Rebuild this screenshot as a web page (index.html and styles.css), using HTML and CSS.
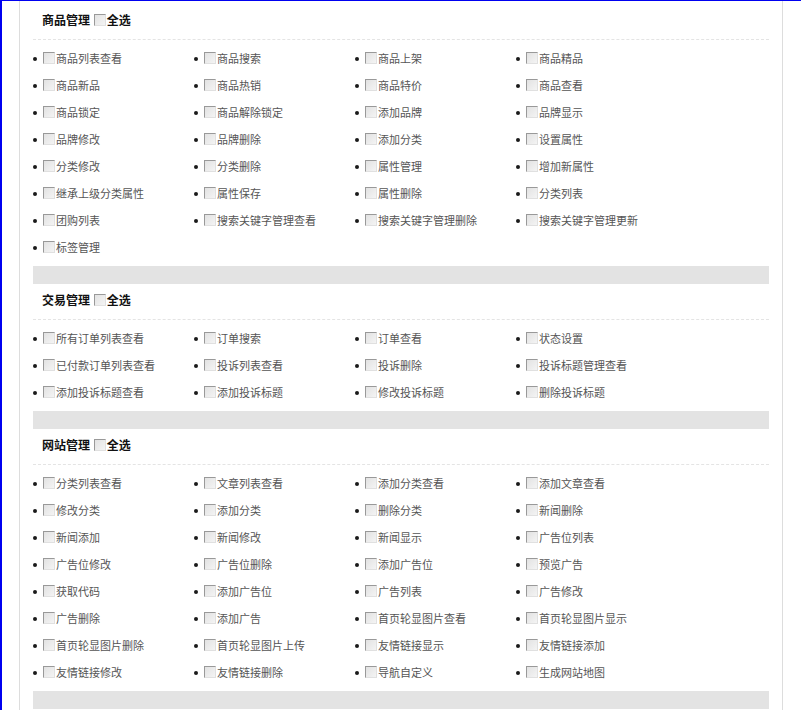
FILE: index.html
```html
<!DOCTYPE html>
<html lang="zh-CN">
<head>
  <meta charset="UTF-8" />
  <title>权限设置</title>
  <link rel="stylesheet" href="styles.css">
</head>
<body>
  <div class="wrap">

    <!-- 商品管理 -->
    <div class="group">
      <h3 class="group-title">商品管理 <label><input type="checkbox" class="chk">全选</label></h3>
      <ul class="perm-list">
        <li><input type="checkbox" class="chk">商品列表查看</li>
        <li><input type="checkbox" class="chk">商品搜索</li>
        <li><input type="checkbox" class="chk">商品上架</li>
        <li><input type="checkbox" class="chk">商品精品</li>
        <li><input type="checkbox" class="chk">商品新品</li>
        <li><input type="checkbox" class="chk">商品热销</li>
        <li><input type="checkbox" class="chk">商品特价</li>
        <li><input type="checkbox" class="chk">商品查看</li>
        <li><input type="checkbox" class="chk">商品锁定</li>
        <li><input type="checkbox" class="chk">商品解除锁定</li>
        <li><input type="checkbox" class="chk">添加品牌</li>
        <li><input type="checkbox" class="chk">品牌显示</li>
        <li><input type="checkbox" class="chk">品牌修改</li>
        <li><input type="checkbox" class="chk">品牌删除</li>
        <li><input type="checkbox" class="chk">添加分类</li>
        <li><input type="checkbox" class="chk">设置属性</li>
        <li><input type="checkbox" class="chk">分类修改</li>
        <li><input type="checkbox" class="chk">分类删除</li>
        <li><input type="checkbox" class="chk">属性管理</li>
        <li><input type="checkbox" class="chk">增加新属性</li>
        <li><input type="checkbox" class="chk">继承上级分类属性</li>
        <li><input type="checkbox" class="chk">属性保存</li>
        <li><input type="checkbox" class="chk">属性删除</li>
        <li><input type="checkbox" class="chk">分类列表</li>
        <li><input type="checkbox" class="chk">团购列表</li>
        <li><input type="checkbox" class="chk">搜索关键字管理查看</li>
        <li><input type="checkbox" class="chk">搜索关键字管理删除</li>
        <li><input type="checkbox" class="chk">搜索关键字管理更新</li>
        <li><input type="checkbox" class="chk">标签管理</li>
      </ul>
    </div>
    <div class="group-sep"></div>

    <!-- 交易管理 -->
    <div class="group">
      <h3 class="group-title">交易管理 <label><input type="checkbox" class="chk">全选</label></h3>
      <ul class="perm-list">
        <li><input type="checkbox" class="chk">所有订单列表查看</li>
        <li><input type="checkbox" class="chk">订单搜索</li>
        <li><input type="checkbox" class="chk">订单查看</li>
        <li><input type="checkbox" class="chk">状态设置</li>
        <li><input type="checkbox" class="chk">已付款订单列表查看</li>
        <li><input type="checkbox" class="chk">投诉列表查看</li>
        <li><input type="checkbox" class="chk">投诉删除</li>
        <li><input type="checkbox" class="chk">投诉标题管理查看</li>
        <li><input type="checkbox" class="chk">添加投诉标题查看</li>
        <li><input type="checkbox" class="chk">添加投诉标题</li>
        <li><input type="checkbox" class="chk">修改投诉标题</li>
        <li><input type="checkbox" class="chk">删除投诉标题</li>
      </ul>
    </div>
    <div class="group-sep"></div>

    <!-- 网站管理 -->
    <div class="group">
      <h3 class="group-title">网站管理 <label><input type="checkbox" class="chk">全选</label></h3>
      <ul class="perm-list">
        <li><input type="checkbox" class="chk">分类列表查看</li>
        <li><input type="checkbox" class="chk">文章列表查看</li>
        <li><input type="checkbox" class="chk">添加分类查看</li>
        <li><input type="checkbox" class="chk">添加文章查看</li>
        <li><input type="checkbox" class="chk">修改分类</li>
        <li><input type="checkbox" class="chk">添加分类</li>
        <li><input type="checkbox" class="chk">删除分类</li>
        <li><input type="checkbox" class="chk">新闻删除</li>
        <li><input type="checkbox" class="chk">新闻添加</li>
        <li><input type="checkbox" class="chk">新闻修改</li>
        <li><input type="checkbox" class="chk">新闻显示</li>
        <li><input type="checkbox" class="chk">广告位列表</li>
        <li><input type="checkbox" class="chk">广告位修改</li>
        <li><input type="checkbox" class="chk">广告位删除</li>
        <li><input type="checkbox" class="chk">添加广告位</li>
        <li><input type="checkbox" class="chk">预览广告</li>
        <li><input type="checkbox" class="chk">获取代码</li>
        <li><input type="checkbox" class="chk">添加广告位</li>
        <li><input type="checkbox" class="chk">广告列表</li>
        <li><input type="checkbox" class="chk">广告修改</li>
        <li><input type="checkbox" class="chk">广告删除</li>
        <li><input type="checkbox" class="chk">添加广告</li>
        <li><input type="checkbox" class="chk">首页轮显图片查看</li>
        <li><input type="checkbox" class="chk">首页轮显图片显示</li>
        <li><input type="checkbox" class="chk">首页轮显图片删除</li>
        <li><input type="checkbox" class="chk">首页轮显图片上传</li>
        <li><input type="checkbox" class="chk">友情链接显示</li>
        <li><input type="checkbox" class="chk">友情链接添加</li>
        <li><input type="checkbox" class="chk">友情链接修改</li>
        <li><input type="checkbox" class="chk">友情链接删除</li>
        <li><input type="checkbox" class="chk">导航自定义</li>
        <li><input type="checkbox" class="chk">生成网站地图</li>
      </ul>
    </div>
    <div class="group-sep"></div>

  </div>
</body>
</html>
```

FILE: styles.css
```css
html, body {
  height: 100%;
}
body {
  margin: 0;
  background: #fff;
  border-top: 1px solid #0000f0;
  border-left: 2px solid #0000f0;
  font-family: "Noto Sans CJK SC", "Liberation Sans", sans-serif;
  font-size: 11px;
  color: #333;
  box-sizing: border-box;
  overflow: hidden;
}
.wrap {
  margin-left: 17px;
  width: 764px;
  min-height: 100%;
  border-left: 1px solid #ddd;
  border-right: 1px solid #ddd;
  padding: 3px 13px 0;
  box-sizing: border-box;
}
.group-title {
  margin: 0;
  height: 36px;
  line-height: 32px;
  padding-left: 9px;
  font-size: 12px;
  font-weight: bold;
  color: #111;
  border-bottom: 1px dashed #e4e4e4;
  box-sizing: border-box;
}
.group-title label {
  font-weight: bold;
}
.perm-list {
  margin: 0;
  padding: 5px 0 5px 0;
  display: grid;
  grid-template-columns: repeat(4, 161px);
  list-style: none;
}
.perm-list li {
  height: 27px;
  line-height: 27px;
  color: #555;
  white-space: nowrap;
}
/* small round bullet in front of each item */
.perm-list li::before {
  content: "";
  display: inline-block;
  width: 4px;
  height: 4px;
  border-radius: 50%;
  background: #1a1a1a;
  margin-right: 6px;
  vertical-align: 2px;
}
/* old style grey checkbox */
.chk {
  appearance: none;
  -webkit-appearance: none;
  width: 12px;
  height: 12px;
  margin: 0 1px 0 0;
  vertical-align: -1px;
  border: 1px solid;
  border-color: #999 #e0e0e0 #e0e0e0 #999;
  background: linear-gradient(135deg, #e2e2e2, #f4f4f4);
  box-sizing: border-box;
}
.group-title .chk {
  margin-left: 1px;
}
.group-sep {
  height: 18px;
  background: #e3e3e3;
}
```
